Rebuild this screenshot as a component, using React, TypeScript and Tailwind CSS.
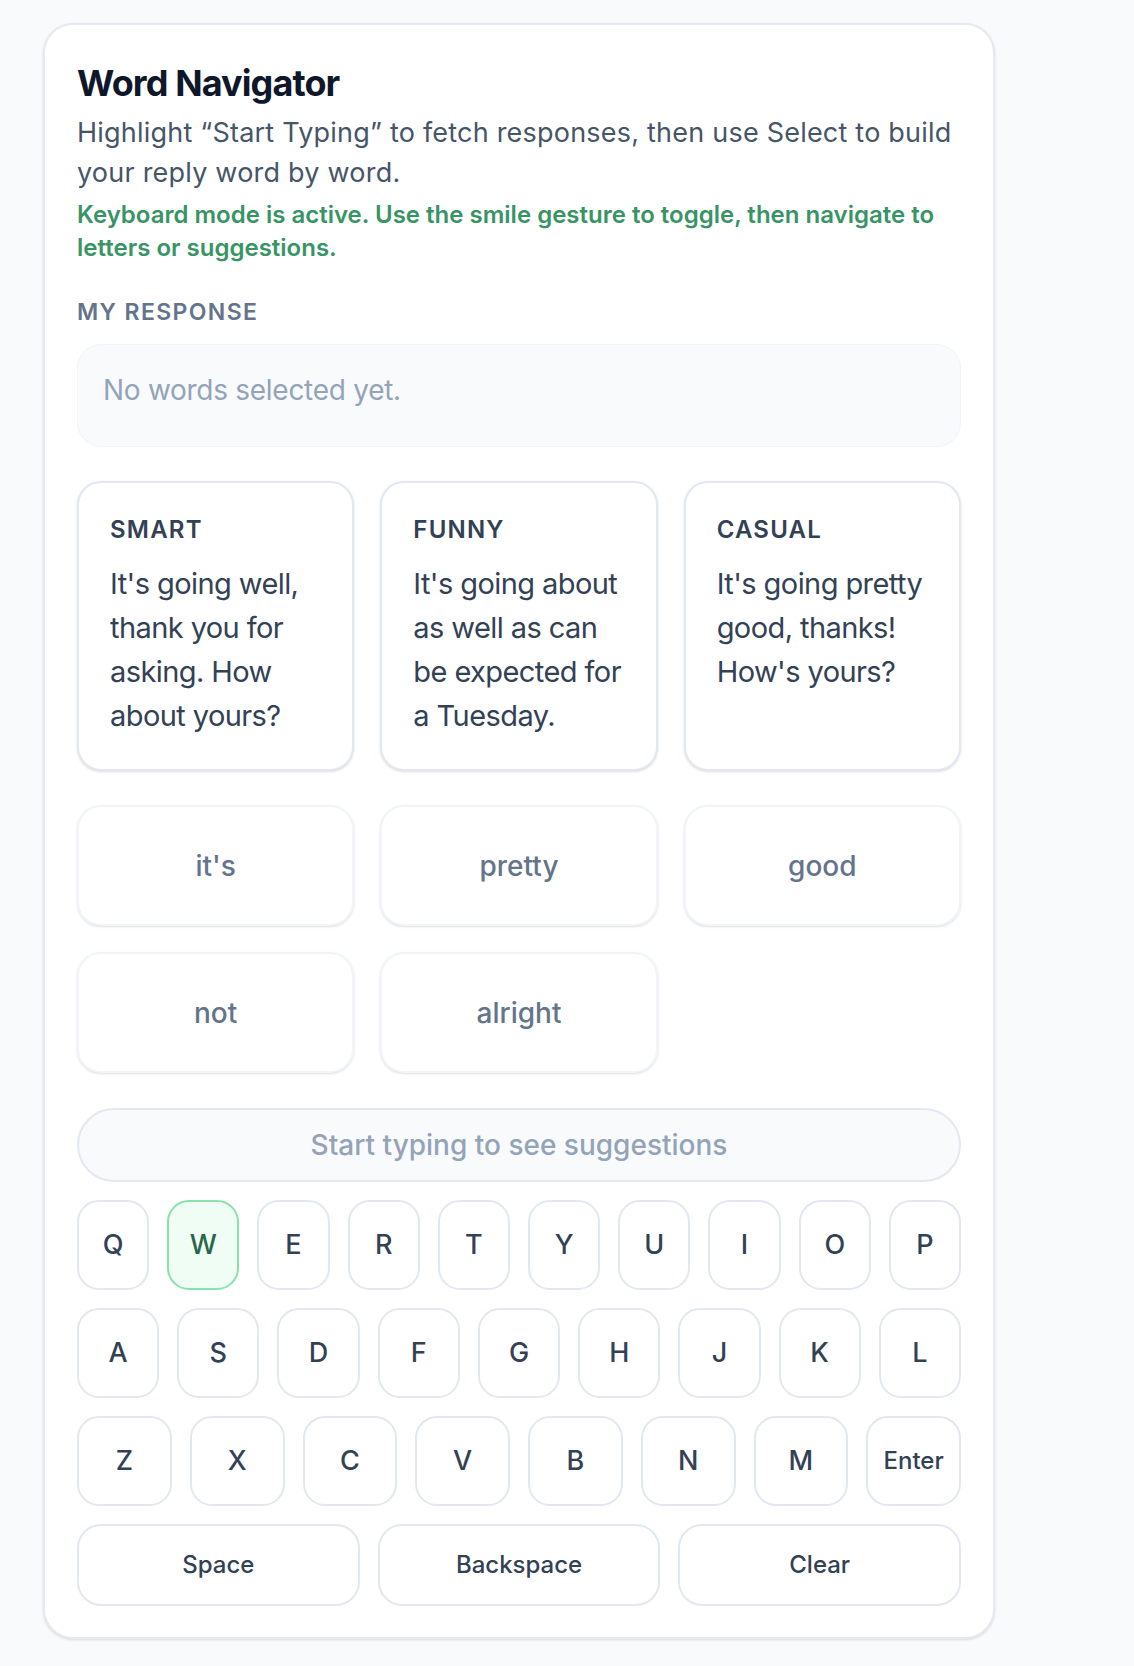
const suggestions = [
  { id: 'smart', tone: 'Smart', text: "It's going well, thank you for asking. How about yours?" },
  { id: 'funny', tone: 'Funny', text: "It's going about as well as can be expected for a Tuesday." },
  { id: 'casual', tone: 'Casual', text: "It's going pretty good, thanks! How's yours?" },
];

const words = ["it's", 'pretty', 'good', 'not', 'alright'];

const letterRows = [
  ['Q', 'W', 'E', 'R', 'T', 'Y', 'U', 'I', 'O', 'P'],
  ['A', 'S', 'D', 'F', 'G', 'H', 'J', 'K', 'L'],
  ['Z', 'X', 'C', 'V', 'B', 'N', 'M', 'Enter'],
];

const actions = ['Space', 'Backspace', 'Clear'];

function Key({ label, active }: { label: string; active?: boolean }) {
  const small = label.length > 1;
  return (
    <button
      className={`flex h-[90px] flex-1 items-center justify-center rounded-[22px] border-2 font-medium ${
        active
          ? 'border-[#86e3aa] bg-[#f0fdf4] text-[#276749]'
          : 'border-[#e2e8f0] bg-white text-[#334155]'
      } ${small ? 'text-[24px]' : 'text-[27px]'}`}
    >
      {label}
    </button>
  );
}

export default function App() {
  const highlighted = 'W';

  return (
    <div
      className="min-h-screen bg-[#f8fafc] pt-[23px] pb-[26px] pl-[43px]"
      style={{ fontFamily: 'Inter, "Noto Sans", sans-serif' }}
    >
      <div className="w-[952px] rounded-[30px] border-2 border-[#e5e9f0] bg-white px-[32px] pt-[36px] pb-[31px] shadow-sm">
        <h1 className="text-[36px] leading-[44px] font-bold tracking-[-0.025em] text-[#0f172a]">
          Word Navigator
        </h1>
        <p className="mt-[8px] text-[27px] leading-[40px] tracking-[0.008em] text-[#475569]">
          Highlight “Start Typing” to fetch responses, then use Select to build
          your reply word by word.
        </p>
        <p className="mt-[5px] text-[24px] leading-[33px] font-semibold text-[#389464]">
          Keyboard mode is active. Use the smile gesture to toggle, then
          navigate to letters or suggestions.
        </p>

        <div className="mt-[32px] text-[23px] leading-[32px] font-semibold tracking-[0.06em] text-[#64748b]">
          MY RESPONSE
        </div>
        <div className="mt-[16px] h-[103px] rounded-[24px] border border-[#f1f5f9] bg-[#f8fafc] px-[25px] pt-[25px] text-[28px] leading-[40px] tracking-[-0.01em] text-[#94a3b8]">
          No words selected yet.
        </div>

        <div className="mt-[34px] grid grid-cols-3 gap-[26px]">
          {suggestions.map((s) => (
            <div
              key={s.id}
              className="rounded-[24px] border-2 border-[#e2e8f0] bg-white py-[31px] pr-[22px] pl-[31px] shadow-sm"
            >
              <div className="text-[24px] leading-[32px] font-semibold tracking-[0.05em] text-[#334155] uppercase">
                {s.tone}
              </div>
              <p className="mt-[16px] h-[176px] text-[29px] leading-[44px] tracking-[-0.02em] text-[#334155]">
                {s.text}
              </p>
            </div>
          ))}
        </div>

        <div className="mt-[34px] grid grid-cols-3 gap-[26px]">
          {words.map((w) => (
            <button
              key={w}
              className="flex h-[121px] items-center justify-center rounded-[24px] border-2 border-[#f1f5f9] bg-white text-[28px] font-medium text-[#64748b] shadow-sm"
            >
              {w}
            </button>
          ))}
        </div>

        <div className="mt-[35px] flex h-[74px] items-center justify-center rounded-full border-2 border-[#e2e8f0] bg-[#f8fafc] text-[28px] font-medium text-[#94a3b8]">
          Start typing to see suggestions
        </div>

        <div className="mt-[18px] flex flex-col gap-[18px]">
          {letterRows.map((row, i) => (
            <div key={i} className="flex gap-[18px]">
              {row.map((k) => (
                <Key key={k} label={k} active={k === highlighted} />
              ))}
            </div>
          ))}
          <div className="flex gap-[18px]">
            {actions.map((a) => (
              <button
                key={a}
                className="flex h-[82px] flex-1 items-center justify-center rounded-[24px] border-2 border-[#e2e8f0] bg-white text-[24px] font-medium text-[#334155]"
              >
                {a}
              </button>
            ))}
          </div>
        </div>
      </div>
    </div>
  );
}
